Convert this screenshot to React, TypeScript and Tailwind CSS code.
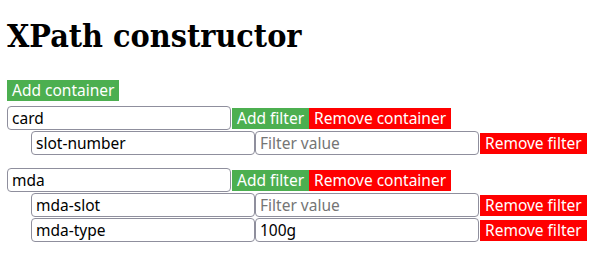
import { useState } from "react";

interface Filter {
  name: string;
  value: string;
}

interface Container {
  name: string;
  filters: Filter[];
}

const initial: Container[] = [
  { name: "card", filters: [{ name: "slot-number", value: "" }] },
  {
    name: "mda",
    filters: [
      { name: "mda-slot", value: "" },
      { name: "mda-type", value: "100g" },
    ],
  },
];

const inputCls =
  "w-[224px] h-[24px] px-[4px] border border-[#8f8f9d] rounded-[4px] bg-white text-black text-[15.5px] outline-none placeholder:text-[#757575]";
const greenBtn = "h-[21px] px-[5px] bg-[#4caf50] text-white text-[15.5px] leading-[21px]";
const redBtn = "h-[21px] px-[5px] bg-[#ff0000] text-white text-[15.5px] leading-[21px]";

export default function App() {
  const [containers, setContainers] = useState<Container[]>(initial);

  const update = (ci: number, fn: (c: Container) => Container) =>
    setContainers((cs) => cs.map((c, i) => (i === ci ? fn(c) : c)));

  return (
    <div className="px-[7px] bg-white min-h-[253px] font-['Noto_Sans',sans-serif]">
      <h1 className="pt-[18px] mb-[23px] text-[32px] leading-[37px] font-bold text-black font-['DejaVu_Serif_Condensed','DejaVu_Serif',serif] [font-stretch:semi-condensed]">
        XPath constructor
      </h1>
      <button
        className={greenBtn}
        onClick={() => setContainers((cs) => [...cs, { name: "", filters: [] }])}
      >
        Add container
      </button>
      <div className="mt-[4px] flex flex-col gap-[13px]">
        {containers.map((c, ci) => (
          <div key={ci} className="flex flex-col gap-[1px]">
            <div className="flex items-center">
              <input
                className={inputCls}
                value={c.name}
                onChange={(e) => update(ci, (x) => ({ ...x, name: e.target.value }))}
              />
              <button
                className={`${greenBtn} ml-[1px]`}
                onClick={() =>
                  update(ci, (x) => ({ ...x, filters: [...x.filters, { name: "", value: "" }] }))
                }
              >
                Add filter
              </button>
              <button
                className={redBtn}
                onClick={() => setContainers((cs) => cs.filter((_, i) => i !== ci))}
              >
                Remove container
              </button>
            </div>
            {c.filters.map((f, fi) => (
              <div key={fi} className="flex items-center pl-[24px]">
                <input
                  className={inputCls}
                  value={f.name}
                  onChange={(e) =>
                    update(ci, (x) => ({
                      ...x,
                      filters: x.filters.map((y, j) => (j === fi ? { ...y, name: e.target.value } : y)),
                    }))
                  }
                />
                <input
                  className={inputCls}
                  placeholder="Filter value"
                  value={f.value}
                  onChange={(e) =>
                    update(ci, (x) => ({
                      ...x,
                      filters: x.filters.map((y, j) => (j === fi ? { ...y, value: e.target.value } : y)),
                    }))
                  }
                />
                <button
                  className={`${redBtn} ml-[1px]`}
                  onClick={() =>
                    update(ci, (x) => ({ ...x, filters: x.filters.filter((_, j) => j !== fi) }))
                  }
                >
                  Remove filter
                </button>
              </div>
            ))}
          </div>
        ))}
      </div>
    </div>
  );
}
